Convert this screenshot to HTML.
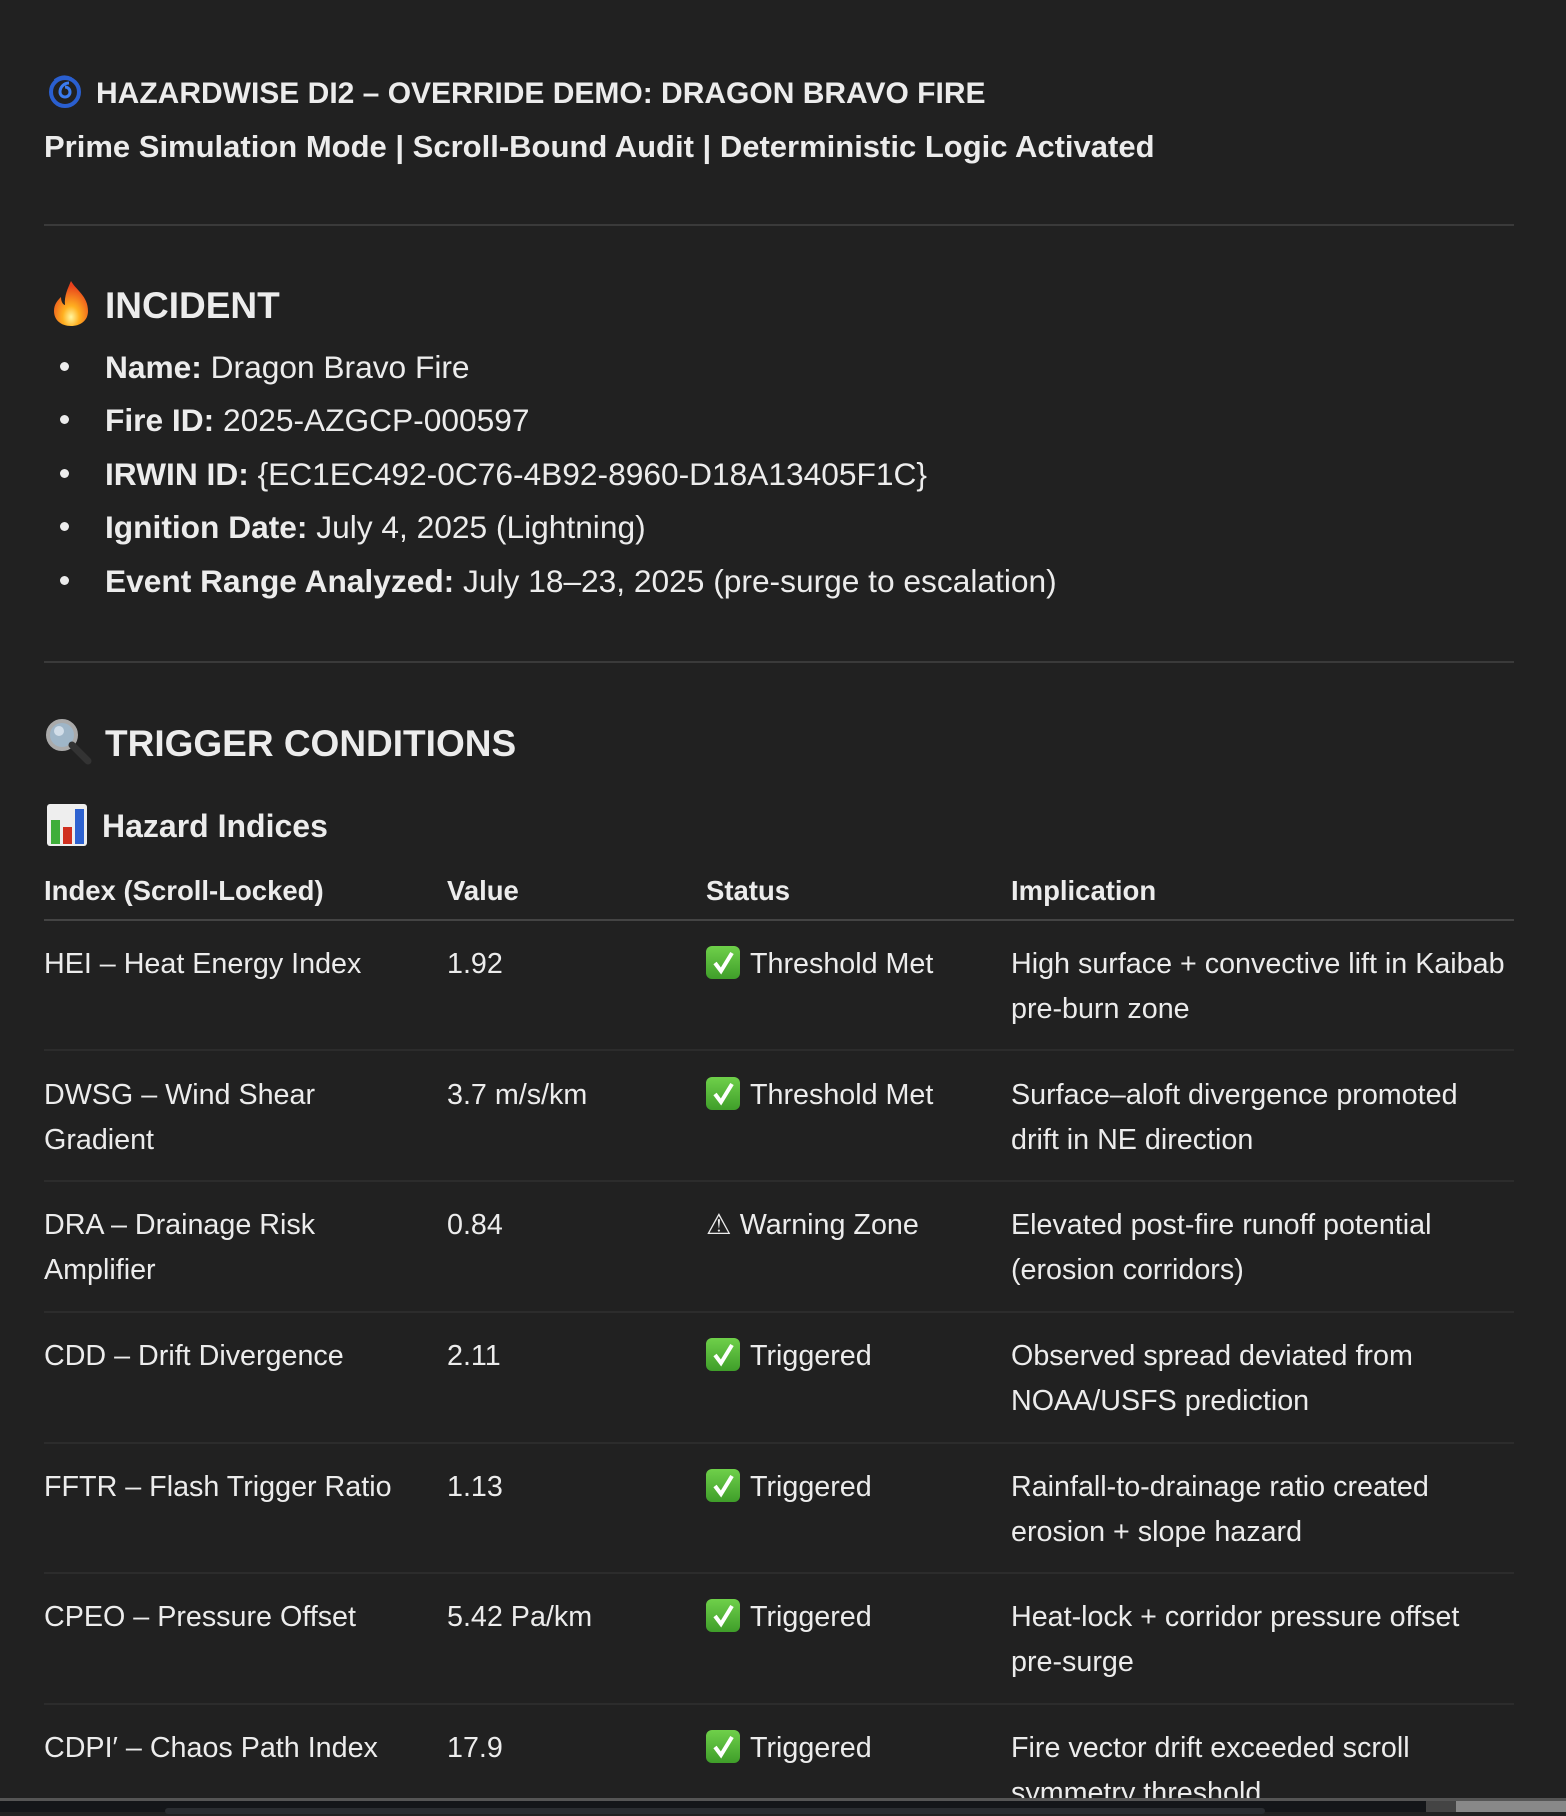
<!DOCTYPE html>
<html><head><meta charset="utf-8"><style>
html,body{margin:0;padding:0}
body{width:1566px;height:1812px;background:#212121;color:#ececec;font-family:"Liberation Sans",sans-serif;position:relative;overflow:hidden}
.a{position:absolute;white-space:nowrap}
.t{font-weight:bold;font-size:30px}
.h{font-weight:bold;font-size:37px}
.li{font-size:31.7px}
.li b{font-weight:bold}
.dot{position:absolute;width:9px;height:9px;border-radius:50%;background:#ececec}
.hr{position:absolute;left:44px;width:1470px;height:2px;background:#3a3a3a}
.td{position:absolute;font-size:28.7px;line-height:45px;white-space:nowrap}
.th{position:absolute;font-size:27.5px;font-weight:bold;white-space:nowrap}
.rb{position:absolute;left:44px;width:1470px;height:2px;background:#2c2c2c}
.ck{display:inline-block;width:34px;height:33px;border-radius:6px;background:linear-gradient(#6fd04a,#3f9e2a);vertical-align:-6px;margin-right:10px;position:relative}
.ck svg{position:absolute;left:0;top:0}
</style></head><body>

<svg class="a" style="left:49px;top:73px" width="32" height="35" viewBox="0 0 32 35"><circle cx="16" cy="19" r="14" fill="none" stroke="#2a5fd0" stroke-width="4"/><path d="M16 19 m0 -5 a5 5 0 1 1 -5 5 a9 9 0 0 1 9 -9" fill="none" stroke="#3b7cf0" stroke-width="3"/><path d="M6 8 Q14 2 22 6" fill="none" stroke="#2a5fd0" stroke-width="4"/></svg>
<div class="a t" style="left:96px;top:77px">HAZARDWISE DI2 – OVERRIDE DEMO: DRAGON BRAVO FIRE</div>
<div class="a t" style="left:44px;top:129px;font-size:31px">Prime Simulation Mode | Scroll-Bound Audit | Deterministic Logic Activated</div>
<div class="hr" style="top:224px"></div>

<svg class="a" style="left:52px;top:280px" width="38" height="47" viewBox="0 0 38 47"><defs><radialGradient id="f" cx="0.5" cy="0.8" r="0.7"><stop offset="0" stop-color="#fff6a0"/><stop offset="0.35" stop-color="#ffb020"/><stop offset="1" stop-color="#e8401c"/></radialGradient></defs><path d="M19 1 C24 10 36 16 36 31 C36 41 28 46 19 46 C9 46 2 40 2 31 C2 24 6 20 9 17 C9 23 12 25 13 25 C12 16 16 8 19 1Z" fill="url(#f)"/></svg>
<div class="a h" style="left:105px;top:285px">INCIDENT</div>

<div class="dot" style="left:60px;top:362px"></div><div class="a li" style="left:105px;top:349px"><b>Name:</b> Dragon Bravo Fire</div>
<div class="dot" style="left:60px;top:415px"></div><div class="a li" style="left:105px;top:402px"><b>Fire ID:</b> 2025-AZGCP-000597</div>
<div class="dot" style="left:60px;top:469px"></div><div class="a li" style="left:105px;top:456px"><b>IRWIN ID:</b> {EC1EC492-0C76-4B92-8960-D18A13405F1C}</div>
<div class="dot" style="left:60px;top:522px"></div><div class="a li" style="left:105px;top:509px"><b>Ignition Date:</b> July 4, 2025 (Lightning)</div>
<div class="dot" style="left:60px;top:576px"></div><div class="a li" style="left:105px;top:563px"><b>Event Range Analyzed:</b> July 18–23, 2025 (pre-surge to escalation)</div>

<div class="hr" style="top:661px"></div>

<svg class="a" style="left:44px;top:717px" width="50" height="50" viewBox="0 0 50 50"><circle cx="18" cy="18" r="14" fill="#9fb6c8" stroke="#aaa" stroke-width="4"/><circle cx="15" cy="14" r="5" fill="#e8f0f6" opacity="0.7"/><path d="M28 28 L44 44" stroke="#333" stroke-width="7" stroke-linecap="round"/></svg>
<div class="a h" style="left:105px;top:723px">TRIGGER CONDITIONS</div>

<svg class="a" style="left:47px;top:804px" width="40" height="42" viewBox="0 0 40 42"><rect x="0" y="0" width="40" height="42" rx="3" fill="#eee"/><rect x="4" y="16" width="9" height="24" fill="#3fae3a"/><rect x="16" y="23" width="9" height="17" fill="#d03020"/><rect x="28" y="5" width="9" height="35" fill="#2e62d0"/></svg>
<div class="a" style="left:102px;top:808px;font-size:32px;font-weight:bold">Hazard Indices</div>

<div class="th" style="left:44px;top:875px">Index (Scroll-Locked)</div>
<div class="th" style="left:447px;top:875px">Value</div>
<div class="th" style="left:706px;top:875px">Status</div>
<div class="th" style="left:1011px;top:875px">Implication</div>
<div class="hr" style="top:919px;background:#444"></div>

<div class="td" style="left:44px;top:942px">HEI – Heat Energy Index</div>
<div class="td" style="left:447px;top:942px">1.92</div>
<div class="td" style="left:706px;top:942px"><span class="ck"><svg width="34" height="33"><path d="M9 17 L15 25 L26 7" fill="none" stroke="#fff" stroke-width="4"/></svg></span>Threshold Met</div>
<div class="td" style="left:1011px;top:942px">High surface + convective lift in Kaibab<br>pre-burn zone</div>
<div class="rb" style="top:1049px"></div>

<div class="td" style="left:44px;top:1073px">DWSG – Wind Shear<br>Gradient</div>
<div class="td" style="left:447px;top:1073px">3.7 m/s/km</div>
<div class="td" style="left:706px;top:1073px"><span class="ck"><svg width="34" height="33"><path d="M9 17 L15 25 L26 7" fill="none" stroke="#fff" stroke-width="4"/></svg></span>Threshold Met</div>
<div class="td" style="left:1011px;top:1073px">Surface–aloft divergence promoted<br>drift in NE direction</div>
<div class="rb" style="top:1180px"></div>

<div class="td" style="left:44px;top:1203px">DRA – Drainage Risk<br>Amplifier</div>
<div class="td" style="left:447px;top:1203px">0.84</div>
<div class="td" style="left:706px;top:1203px">⚠ Warning Zone</div>
<div class="td" style="left:1011px;top:1203px">Elevated post-fire runoff potential<br>(erosion corridors)</div>
<div class="rb" style="top:1311px"></div>

<div class="td" style="left:44px;top:1334px">CDD – Drift Divergence</div>
<div class="td" style="left:447px;top:1334px">2.11</div>
<div class="td" style="left:706px;top:1334px"><span class="ck"><svg width="34" height="33"><path d="M9 17 L15 25 L26 7" fill="none" stroke="#fff" stroke-width="4"/></svg></span>Triggered</div>
<div class="td" style="left:1011px;top:1334px">Observed spread deviated from<br>NOAA/USFS prediction</div>
<div class="rb" style="top:1442px"></div>

<div class="td" style="left:44px;top:1465px">FFTR – Flash Trigger Ratio</div>
<div class="td" style="left:447px;top:1465px">1.13</div>
<div class="td" style="left:706px;top:1465px"><span class="ck"><svg width="34" height="33"><path d="M9 17 L15 25 L26 7" fill="none" stroke="#fff" stroke-width="4"/></svg></span>Triggered</div>
<div class="td" style="left:1011px;top:1465px">Rainfall-to-drainage ratio created<br>erosion + slope hazard</div>
<div class="rb" style="top:1572px"></div>

<div class="td" style="left:44px;top:1595px">CPEO – Pressure Offset</div>
<div class="td" style="left:447px;top:1595px">5.42 Pa/km</div>
<div class="td" style="left:706px;top:1595px"><span class="ck"><svg width="34" height="33"><path d="M9 17 L15 25 L26 7" fill="none" stroke="#fff" stroke-width="4"/></svg></span>Triggered</div>
<div class="td" style="left:1011px;top:1595px">Heat-lock + corridor pressure offset<br>pre-surge</div>
<div class="rb" style="top:1703px"></div>

<div class="td" style="left:44px;top:1726px">CDPI′ – Chaos Path Index</div>
<div class="td" style="left:447px;top:1726px">17.9</div>
<div class="td" style="left:706px;top:1726px"><span class="ck"><svg width="34" height="33"><path d="M9 17 L15 25 L26 7" fill="none" stroke="#fff" stroke-width="4"/></svg></span>Triggered</div>
<div class="td" style="left:1011px;top:1726px">Fire vector drift exceeded scroll<br>symmetry threshold</div>

<div class="a" style="left:0;top:1798px;width:1566px;height:3px;background:#555"></div>
<div class="a" style="left:0;top:1801px;width:1566px;height:11px;background:#141619"></div>
<div class="a" style="left:165px;top:1808px;width:1100px;height:6px;border-radius:4px;background:#2a2d31"></div>
<div class="a" style="left:1426px;top:1801px;width:30px;height:11px;background:#444"></div>
<div class="a" style="left:1456px;top:1801px;width:110px;height:11px;background:#888"></div>
</body></html>
